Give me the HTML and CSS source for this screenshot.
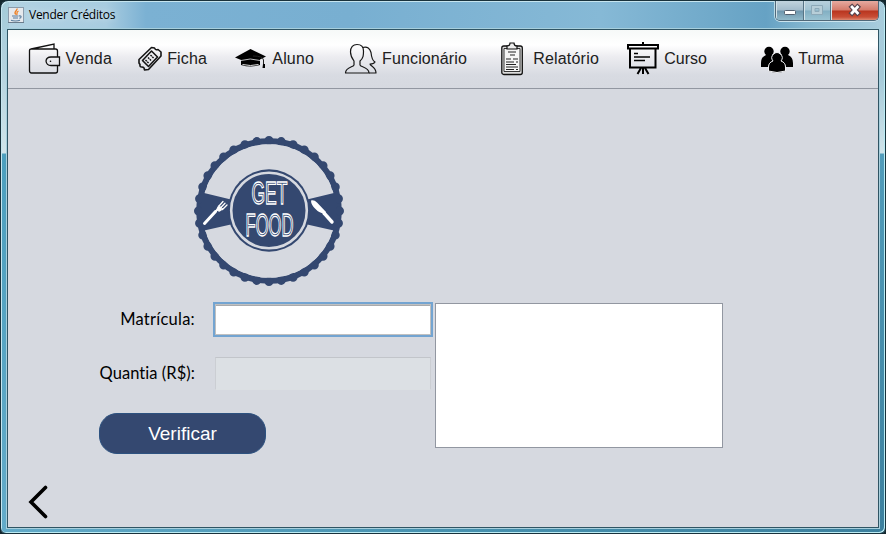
FILE: index.html
```html
<!DOCTYPE html>
<html lang="pt-BR">
<head>
<meta charset="utf-8">
<title>Vender Créditos</title>
<link rel="stylesheet" href="styles.css">
</head>
<body>
<div class="window">
  <header class="titlebar">
    <svg class="java" width="16" height="16" viewBox="0 0 16 16"><rect x=".5" y=".5" width="15" height="15" fill="#e6e9ed" stroke="#8b9cac"/><path d="M0 15.5h16" stroke="#6b7c8c"/><path d="M9 1.500c1 2-4 3-1.300 6M10.500 4c-3 1.300-.5 2.500-2 4" fill="none" stroke="#ee8125" stroke-width="1.300"/><path d="M4 9h6.500M5 11h5M3 13.300c2 1 7 1 9 0M11 9c3-.7 2.500 2 .3 2.300" fill="none" stroke="#597d9d" stroke-width="1.100"/></svg>
    <span class="title">Vender Créditos</span>
    <div class="controls">
      <div class="ctl"><svg width="28" height="18" viewBox="0 0 28 18"><rect x="8.500" y="9.500" width="11" height="4" rx="1" fill="#fff" stroke="#53606f"/></svg></div>
      <div class="ctl ctl-max"><svg width="26" height="18" viewBox="0 0 26 18"><path fill-rule="evenodd" d="M7.500 4.500h11v9h-11zM11 7.500h4v3h-4z" fill="#b7ced8" stroke="#8da9b8"/></svg></div>
      <div class="ctl ctl-close"><svg width="47" height="18" viewBox="0 0 47 18"><path d="M21 6l5.500 6M26.500 6l-5.500 6" stroke="#55424c" stroke-width="5" stroke-linecap="square"/><path d="M21 6l5.500 6M26.500 6l-5.500 6" stroke="#fff" stroke-width="2.700" stroke-linecap="square"/></svg></div>
    </div>
  </header>
  <main class="client">
    <nav class="menu">
      <div class="item venda"><svg width="33" height="32" viewBox="0 0 33 32"><g fill="none" stroke="#111" stroke-width="1.300"><path d="M1.500 7.500v20q0 2.500 2 2.500h24q2 0 2-2v-5.500M29.500 14V8q0-2-2-2H3q-1.500 0-1.500 1.500M3 6L26 1v5M31.500 14h-8.500q-4.500 0-5 4 .5 4.500 5 4.500h8.500z"/></g><circle cx="22.500" cy="18.300" r=".8"/></svg><span>Venda</span></div>
      <div class="item ficha"><svg width="24" height="26" viewBox="0 0 24 26"><g fill="none" stroke="#151515" stroke-width="1.600" stroke-linejoin="round"><path d="M1 13.500L13.500 1.500l3 .5q1 2.500 3.500 1.500l3 2.500v4L10.500 23.500l-4 .5q0-3-2.500-3-2.500.3-2-2.500L1 17z"/><path d="M4.500 14.500L13.500 5l6 6-9 9.500z"/></g><path d="M7.500 14l3.500 3.500M10 11.500l3.500 3.500M12.500 9l3.500 3.500" stroke="#111" stroke-width="1.400" stroke-dasharray="1.800 .7"/></svg><span>Ficha</span></div>
      <div class="item aluno"><svg width="32" height="22" viewBox="0 0 32 22"><path d="M0 9.500L15.500 1 31 8.500 16 16z"/><path d="M6 11q10-3 19 0v6q-9 3-19 0z"/><path d="M6 12.500q9-3 19 0" fill="none" stroke="#e9eaed" stroke-width=".8"/><path d="M7.500 16.500q8 2 16 0" fill="none" stroke="#ddd"/><path d="M18 8q10 0 10.500 4v5" fill="none" stroke="#222"/><path d="M28 16h2v4h-2.500z"/></svg><span>Aluno</span></div>
      <div class="item func"><svg width="34" height="32" viewBox="0 0 34 32"><g fill="none" stroke="#161616" stroke-width="1.200" stroke-linejoin="round"><path d="M10 18C7 14 6.500 12 6.500 9 6.500 4 9 1.500 13 1.500S19.500 4 19.500 8c0 4 0 7-3.500 10v4c0 2 9 2 9 8H1.500c0-6 8.500-6 8.500-8z"/><path d="M18.500 4.500c5-1.500 7.500 1 8.500 5 .5 5 1 8 4 9.500-1 2-4 2-5 2 0 2 6 3 6 9h-7"/></g></svg><span>Funcionário</span></div>
      <div class="item rel"><svg width="24" height="34" viewBox="0 0 24 34"><rect x="1.800" y="4" width="20.500" height="28.500" rx="2" fill="#ddd" stroke="#111" stroke-width="1.300"/><path d="M4 6.500h16v23H4z" fill="#f5f5f5" stroke="#222" stroke-width=".9"/><path d="M7 7V4q3 0 3-3h4q0 3 3 3v3z" fill="#eee" stroke="#111" stroke-width="1.200"/><path d="M8 10h8M10 13h5M6 17h5M13 17h5M6 20h8M16 20h2M6 22.500h10M6 25h12M6 27.500h8M16 27.500h2" stroke="#222" stroke-width="1.200"/></svg><span>Relatório</span></div>
      <div class="item curso"><svg width="33" height="34" viewBox="0 0 33 34"><g fill="none" stroke="#000" stroke-width="2"><path d="M2 3h30v3.500H2zM4 7v18.500h25.500V7M17 0v3M17 26v6M15 26l-3.500 6M19 26l3.500 6"/><path d="M8 11.500h4M8 15h16M8 18.500h11" stroke-width="1.700"/></g></svg><span>Curso</span></div>
      <div class="item turma"><svg width="34" height="28" viewBox="0 0 34 28"><path d="M1 22v-4q0-6 5-8a4.700 4.700 0 1 1 6 0q5 2 5 8v4zM17 22v-4q0-6 5-8a4.700 4.700 0 1 1 6 0q5 2 5 8v4z"/><path d="M8.500 26v-4q0-4.500 4.500-6a5.100 5.100 0 1 1 8 0Q25.500 17.500 25.500 22v4q-8.500 3-17 0z" stroke="#f1f2f4" stroke-width="1"/></svg><span>Turma</span></div>
    </nav>
    <section class="content">
      <svg class="logo" width="152" height="152" viewBox="-76 -76 152 152">
        <circle r="69.700" fill="none" stroke="#344870" stroke-width="6"/>
        <circle r="70.500" fill="none" stroke="#344870" stroke-width="9" stroke-linecap="round" stroke-dasharray="0 1" pathLength="36"/>
        <circle r="66.700" fill="#d6d9e0"/>
        <path d="M-67-18.500L-36-11v24l-31 7zM67-18.500L36-11v24l31 7z" fill="#344870"/>
        <circle cy="-.5" r="41.200" fill="#344870"/>
        <circle cy="-.5" r="37.800" fill="none" stroke="#d6d9e0" stroke-width="2.600"/>
        <g fill="none" stroke="#fff" stroke-linecap="round"><path d="M-64.500 12.500l11-12" stroke-width="3"/><path d="M-55 2l5-5" stroke-width="2"/><path d="M-50.500-5q-3 4 0 5 1 1 4-2z" fill="#fff" stroke-width="1"/><path d="M-50-5l4-4.500M-48.300-3.300l4.300-4.500M-46.500-1.500l4.500-4.500" stroke-width="1.300"/></g>
        <path d="M42-10.500q3-1 6 2l9 9.500q-1 1.500-2 1.500-5-.5-9-5-4-4-4-8z" fill="#fff"/>
        <path d="M55 2l8 9" stroke="#fff" stroke-width="3.400" stroke-linecap="round"/>
        <g class="inline-text"><text x="-17.500" y="-7.500" textLength="36" lengthAdjust="spacingAndGlyphs">GET</text><text x="-23.500" y="25" textLength="48" lengthAdjust="spacingAndGlyphs">FOOD</text></g>
      </svg>
      <div class="form">
        <div class="fields">
          <label for="m"><span class="matricula">Matrícula:</span></label><input id="m" class="field active">
          <label for="q"><span class="quantia">Quantia (R$):</span></label><input id="q" class="field disabled" disabled>
          <button class="verify">Verificar</button>
        </div>
        <div class="result"></div>
      </div>
      <svg class="back" width="20" height="34" viewBox="0 0 20 34"><path d="M17.500 2.500L3 17l14.500 14.500" fill="none" stroke="#000" stroke-width="3.600" stroke-linecap="round"/></svg>
    </section>
  </main>
</div>
</body>
</html>
```
FILE: styles.css
```css
* { box-sizing: border-box; }
body { margin: 0; width: 886px; height: 534px; overflow: hidden; background: #14282f; font-family: "Liberation Sans", sans-serif; }
svg { display: block; flex: none; }
.window {
  width: 886px; height: 534px; padding: 0 6px 5px; display: flex; flex-direction: column;
  border: 1px solid #19323c; border-radius: 8px 8px 6px 6px;
  box-shadow: inset 1px 1px #c6e5ef, inset -1px -1px #bcecf4;
  background:
    linear-gradient(#a9cddd, #a5cad9 75px, #d0e4ea 152px, #529dbb 153px, #3c809e) right / 8px 100% no-repeat,
    linear-gradient(#a3cbd9, #b5d3df 70px, #d0e4ea 152px, #4c9fbe 153px, #63abc9) left / 8px 100% no-repeat,
    linear-gradient(90deg, #63abc9, #4792b0 50%, #3c809e) bottom / 100% 8px no-repeat,
    linear-gradient(90deg, #b3d3e3, #a8cce0 105px, #7bb1d3 145px, #78afd1 350px, #86b9d6 600px, #66a2c4 765px, #83b6cf 805px, #a9cddd);
}
.titlebar { height: 28px; display: flex; flex: none; }
.java { margin: 6px 0 0 1px; }
.title { margin: 5px 0 0 5px; font: 12px/17px "Open Sans", sans-serif; letter-spacing: -.27px; color: #000; text-shadow: 0 0 7px #ffffffb0; white-space: nowrap; }
.controls { display: flex; height: 20px; margin: 0 0 0 auto; border: 1px solid #50697a; border-top: 0; border-radius: 0 0 5px 5px; overflow: hidden; box-shadow: 0 1px #cbe4ee, -1px 0 #bbdbe6; }
.ctl { width: 28px; border-right: 1px solid #577485; background: linear-gradient(#c0d3dd, #a3bccb 9px, #6e96ad 10px, #91b9c9); box-shadow: inset 1px 0 #d3e3e9; }
.ctl-max { width: 27px; background: linear-gradient(#b8d0dc, #a1c3d2 9px, #82afc3 10px, #9bc3d2); }
.ctl-close { width: 47px; border: 0; background: linear-gradient(#e5aaa0, #d47b6b 9px, #b9351f 10px, #c94e36 16px, #dc8b74); }
.client { flex: 1; width: 872px; border: 1px solid #305564; background: #d6d9e0; display: flex; flex-direction: column; box-shadow: 0 0 0 1px #a7cfdd; }
.menu { height: 59px; flex: none; display: flex; align-items: center; padding-left: 20px; border-bottom: 1px solid #9297a1; background: linear-gradient(#f6f9f8, #fff 15px, #ececf0 27px, #d8dbe2 45px, #d6d9e0); color: #202020; font-size: 16px; }
.item { display: flex; align-items: center; justify-content: space-between; flex: none; white-space: nowrap; }
.item span { line-height: 20px; margin-top: -1px; }
.venda { width: 84px; margin-right: 26px; letter-spacing: .2px; }
.ficha { width: 69px; margin-right: 28px; letter-spacing: .15px; }
.aluno { width: 79px; margin-right: 30px; letter-spacing: .15px; }
.func { width: 123px; margin-right: 33px; letter-spacing: .12px; }
.rel { width: 99px; margin-right: 27px; letter-spacing: .2px; }
.curso { width: 81px; margin-right: 53px; }
.turma { width: 84px; }
.content { flex: 1; display: flex; flex-direction: column; align-items: flex-start; }
.logo { margin: 46px 0 0 185px; }
.inline-text { font: 31px "Liberation Sans", sans-serif; fill: #344870; stroke: #fff; stroke-width: 1.350px; }
.form { display: flex; margin: 16px 0 0 91px; }
.fields { width: 336px; display: grid; grid-template-columns: 114px 220px; grid-template-rows: 55px 55px 41px; }
label { font: 16.500px/32px Lato, sans-serif; color: #000; width: 96px; text-align: right; white-space: nowrap; }
.matricula { letter-spacing: .25px; }
.quantia { letter-spacing: .06px; display: block; margin-top: -1px; }
.field { width: 220px; height: 35px; margin-top: -1px; padding: 4px 8px; border: 2px solid #73a4d1; outline: none; background: #fff; font-size: 16px; }
.active { box-shadow: inset 0 0 0 1px #c0c0c0, inset 0 2px #a8aaad; }
.disabled { width: 216px; height: 33px; margin: -1px 2px 0; border: 1px solid #cbced3; border-top-color: #c2c5ca; border-bottom-color: #dce0e3; background: #dce0e4; }
.verify { width: 167px; height: 41px; padding: 0; border: 1px solid #2d5280; border-radius: 18px; background: #344870; color: #fff; font: 19px "Liberation Sans", sans-serif; }
.result { width: 288px; height: 145px; background: #fff; border: 1px solid #9297a1; }
.back { margin: 31px 0 0 20px; }
```
